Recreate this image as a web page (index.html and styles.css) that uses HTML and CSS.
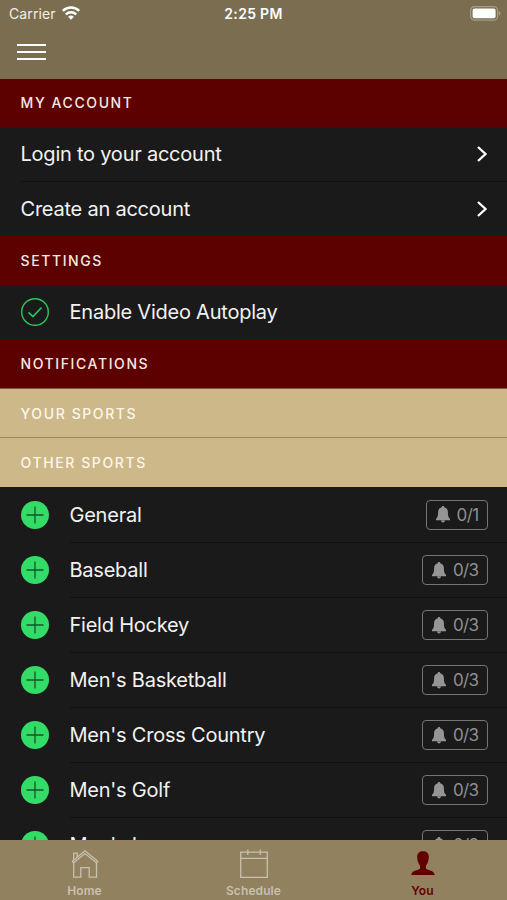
FILE: index.html
```
<!DOCTYPE html>
<html lang="en">
<head>
  <meta charset="UTF-8">
  <meta name="viewport" content="width=device-width, initial-scale=1.0">
  <title>You</title>
  <link rel="stylesheet" href="styles.css">
</head>
<body>
  <svg class="sprite" width="0" height="0">
    <symbol id="chevron" viewBox="0 0 12 18">
      <path d="M2 2 L9.5 9 L2 16" fill="none" stroke="#fff" stroke-width="2.3"/>
    </symbol>
    <symbol id="plus" viewBox="0 0 28 28">
      <circle cx="14" cy="14" r="14" fill="#33dc66"/>
      <path d="M5.5 14 H22.5 M14 5.5 V22.5" stroke="#14562b" stroke-width="1.3"/>
    </symbol>
    <symbol id="bell" viewBox="0 0 14 17">
      <path d="M7 0 C7.8 0 8.3 .5 8.3 1.3 C10.6 1.9 11.9 3.6 11.9 6 C11.9 9.8 12.4 11.8 14 12.8 V14.2 H0 V12.8 C1.6 11.8 2.1 9.8 2.1 6 C2.1 3.6 3.4 1.9 5.7 1.3 C5.7 .5 6.2 0 7 0 Z M5 14.6 H9 C8.8 15.9 8 16.6 7 16.6 C6 16.6 5.2 15.9 5 14.6 Z" fill="#959595"/>
    </symbol>
  </svg>

  <div class="app">
    <header class="header">
      <div class="status-bar">
        <div class="carrier">
          <span>Carrier</span>
          <svg width="18" height="14" viewBox="0 0 18 14" fill="none" stroke="#fff" stroke-width="2.5">
            <path d="M.8 4.9 A11.7 11.7 0 0 1 17.2 4.9"/>
            <path d="M3.8 8.3 A7.5 7.5 0 0 1 14.2 8.3"/>
            <path d="M9 13.8 L6.1 10.8 A4.2 4.2 0 0 1 11.9 10.8 Z" fill="#fff" stroke="none"/>
          </svg>
        </div>
        <div class="time">2:25 PM</div>
        <div class="battery">
          <svg width="31" height="15" viewBox="0 0 31 15">
            <rect x=".6" y=".6" width="27" height="13.6" rx="4" fill="none" stroke="#a79d86" stroke-width="1.2"/>
            <rect x="2.6" y="2.6" width="23" height="9.6" rx="2" fill="#fff"/>
            <path d="M28.8 5 C31 5.8 31 9 28.8 9.8 Z" fill="#a79d86"/>
          </svg>
        </div>
      </div>
      <button class="menu-btn" aria-label="Menu">
        <span></span>
        <span></span>
        <span></span>
      </button>
    </header>

    <main class="content">
      <h2 class="section-title first">My Account</h2>
      <ul class="list">
        <li class="row link-row"><div class="row-body"><span class="label">Login to your account</span><svg class="chevron"><use href="#chevron"/></svg></div></li>
        <li class="row link-row"><div class="row-body"><span class="label">Create an account</span><svg class="chevron"><use href="#chevron"/></svg></div></li>
      </ul>

      <h2 class="section-title settings">Settings</h2>
      <ul class="list">
        <li class="row link-row">
          <svg class="row-icon" viewBox="0 0 28 28" fill="none" stroke="#2cc65b">
            <circle cx="14" cy="14" r="13.3" stroke-width="1.4"/>
            <path d="M7.5 14.3 L12 18.6 L20.5 9.5" stroke-width="1.6"/>
          </svg>
          <div class="row-body"><span class="label">Enable Video Autoplay</span></div>
        </li>
      </ul>

      <h2 class="section-title notifications">Notifications</h2>
      <h3 class="section-title sub">Your Sports</h3>
      <h3 class="section-title sub last">Other Sports</h3>
      <ul class="list">
        <li class="row"><svg class="row-icon"><use href="#plus"/></svg><div class="row-body"><span class="label">General</span><span class="badge"><svg class="bell"><use href="#bell"/></svg><span>0/1</span></span></div></li>
        <li class="row"><svg class="row-icon"><use href="#plus"/></svg><div class="row-body"><span class="label">Baseball</span><span class="badge"><svg class="bell"><use href="#bell"/></svg><span>0/3</span></span></div></li>
        <li class="row"><svg class="row-icon"><use href="#plus"/></svg><div class="row-body"><span class="label">Field Hockey</span><span class="badge"><svg class="bell"><use href="#bell"/></svg><span>0/3</span></span></div></li>
        <li class="row"><svg class="row-icon"><use href="#plus"/></svg><div class="row-body"><span class="label">Men's Basketball</span><span class="badge"><svg class="bell"><use href="#bell"/></svg><span>0/3</span></span></div></li>
        <li class="row"><svg class="row-icon"><use href="#plus"/></svg><div class="row-body"><span class="label">Men's Cross Country</span><span class="badge"><svg class="bell"><use href="#bell"/></svg><span>0/3</span></span></div></li>
        <li class="row"><svg class="row-icon"><use href="#plus"/></svg><div class="row-body"><span class="label">Men's Golf</span><span class="badge"><svg class="bell"><use href="#bell"/></svg><span>0/3</span></span></div></li>
        <li class="row"><svg class="row-icon"><use href="#plus"/></svg><div class="row-body"><span class="label">Men's Lacrosse</span><span class="badge"><svg class="bell"><use href="#bell"/></svg><span>0/3</span></span></div></li>
      </ul>
    </main>

    <nav class="tab-bar">
      <a class="tab">
        <svg width="30" height="30" viewBox="0 0 30 30" fill="none" stroke="currentColor" stroke-width="1.3">
          <path d="M2.2 12.4 L15 1.8 L28 12.4 M3.7 13.8 L15 4.6 L26.5 13.8 M2.2 12.4 L3.7 13.8 M28 12.4 L26.5 13.8"/>
          <path d="M3.7 13.5 V28.2 H10.8 V18.7 H19.2 V28.2 H26.5 V13.5"/>
          <path d="M3.7 11 V4.2 H7.2 V8"/>
        </svg>
        <span>Home</span>
      </a>
      <a class="tab">
        <svg width="30" height="30" viewBox="0 0 30 30" fill="none" stroke="currentColor" stroke-width="1.3">
          <path d="M1.7 3.2 H28.3 V28.4 H1.7 Z M1.7 9.3 H28.3 M8.8 .6 V6 M21.2 .6 V6"/>
        </svg>
        <span>Schedule</span>
      </a>
      <a class="tab active">
        <svg width="30" height="30" viewBox="0 0 30 30" fill="currentColor">
          <path d="M15 2.3 C18.7 2.3 20.8 4.3 20.8 7.6 C20.8 12 19.6 15 17.9 16.8 V19.2 C18.3 21.7 26.2 20.3 26.7 25.9 H3.3 C3.8 20.3 11.7 21.7 12.1 19.2 V16.8 C10.4 15 9.2 12 9.2 7.6 C9.2 4.3 11.3 2.3 15 2.3 Z"/>
        </svg>
        <span>You</span>
      </a>
    </nav>
  </div>
</body>
</html>
```
FILE: styles.css
```
:root {
  --header-bg: #7b6d4f;
  --tab-bg: #91815f;
  --garnet: #5c0000;
  --gold: #ccb888;
  --row-bg: #1a1a1a;
  --divider: #111111;
}

* {
  box-sizing: border-box;
  margin: 0;
  padding: 0;
}

body {
  font-family: Inter, Roboto, "Liberation Sans", sans-serif;
  background-color: var(--row-bg);
  color: #f2f2f2;
}

.sprite {
  display: block;
}

.app {
  display: flex;
  flex-direction: column;
  height: 100vh;
  overflow: hidden;
}

.header {
  flex: none;
  height: 79px;
  background-color: var(--header-bg);
}

.status-bar {
  display: grid;
  grid-template-columns: 1fr auto 1fr;
  align-items: center;
  height: 27px;
  padding: 0 6px 0 9px;
  font-size: 14px;
}

.carrier {
  display: flex;
  align-items: center;
  gap: 6px;
  color: #f1eee8;
  letter-spacing: 0.1px;
}

.carrier svg {
  margin-top: -2px;
}

.time {
  margin-right: 3px;
  font-weight: 600;
  letter-spacing: 0.3px;
  color: #fff;
}

.battery {
  display: flex;
  justify-content: flex-end;
}

.menu-btn {
  display: flex;
  flex-direction: column;
  gap: 4.7px;
  margin: 16.5px 0 0 17px;
  border: none;
  background: none;
}

.menu-btn span {
  width: 29px;
  height: 2.5px;
  background-color: #fff;
}

.content {
  flex: 1;
  min-height: 0;
  overflow: hidden;
}

.section-title {
  display: flex;
  align-items: center;
  height: 49px;
  padding: 0 20.5px;
  background-color: var(--garnet);
  color: #f8e8e0;
  font-size: 14px;
  font-weight: 500;
  letter-spacing: 1.6px;
  text-transform: uppercase;
}

.section-title.first {
  height: 48px;
  padding-bottom: 1px;
}

.section-title.settings {
  height: 50px;
}

.section-title.notifications {
  height: 50px;
  border-bottom: 1px solid #7d5a43;
}

.section-title.sub {
  color: #fff6ea;
  background-color: var(--gold);
  border-bottom: 1px solid #9a8862;
}

.section-title.last {
  border-bottom-color: #ccb888;
}

.list {
  list-style: none;
}

.row {
  display: flex;
  align-items: center;
  height: 55px;
  padding-left: 20.5px;
  font-size: 20px;
}

.link-row {
  height: 54px;
}

.row-body {
  flex: 1;
  align-self: stretch;
  display: flex;
  align-items: center;
  padding-right: 19px;
}

.row + .row .row-body {
  border-top: 1px solid var(--divider);
}

.label {
  flex: 1;
  letter-spacing: -0.23px;
}

.row-icon {
  flex: none;
  width: 28px;
  height: 28px;
  margin-right: 21px;
}

.chevron {
  width: 12px;
  height: 18px;
}

.badge {
  display: flex;
  align-items: center;
  height: 30px;
  padding: 0 8.5px;
  gap: 7px;
  border: 1.5px solid #757575;
  border-radius: 4px;
  color: #8f8f8f;
  font-size: 17px;
  letter-spacing: -0.6px;
}

.bell {
  width: 14px;
  height: 17px;
}

.tab-bar {
  flex: none;
  display: grid;
  grid-template-columns: repeat(3, 1fr);
  height: 60px;
  background-color: var(--tab-bg);
}

.tab {
  display: flex;
  flex-direction: column;
  align-items: center;
  padding-top: 9px;
  color: #c8c0b0;
  font-size: 12px;
  font-weight: 600;
  line-height: 14px;
  letter-spacing: 0.1px;
}

.tab span {
  margin-top: 5px;
}

.tab.active {
  color: #620000;
}
```
